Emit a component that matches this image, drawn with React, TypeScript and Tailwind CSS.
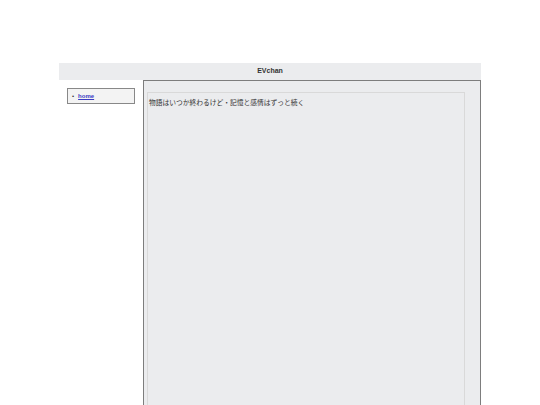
import React from 'react'

const jp = { fontFamily: '"Liberation Sans", "Noto Sans CJK JP", sans-serif' }

export default function App() {
  return (
    <div className="min-h-[405px] bg-white pt-[63px] overflow-hidden" style={jp}>
      <div className="ml-[59px] w-[422px]">
        {/* header */}
        <header className="h-[17px] bg-[#ebecee] flex items-center justify-center text-[7px] font-bold text-[#333]">
          EVchan
        </header>

        <div className="flex">
          {/* left nav */}
          <aside className="w-[84px] pt-2 pl-2">
            <ul className="w-[68px] h-[16px] border border-[#888] bg-[#f3f3f3] flex items-center pl-[4px]">
              <li className="flex items-center gap-[4px] text-[6px]">
                <span className="text-[#333] text-[6px] leading-none">•</span>
                <a href="#" className="text-[#3b3bc4] underline font-bold">home</a>
              </li>
            </ul>
          </aside>

          {/* main panel */}
          <main className="w-[338px] h-[325px] border border-b-0 border-[#7d7d7d] bg-[#ebecee] pl-[3px] pt-[11px] pr-[15px]">
            <div className="h-full border border-b-0 border-[#d9d9d9] pl-[1px] pt-[5px]">
              <p className="text-[6.75px] leading-[10px] text-[#333]">
                物語はいつか終わるけど・記憶と感情はずっと続く
              </p>
            </div>
          </main>
        </div>
      </div>
    </div>
  )
}
